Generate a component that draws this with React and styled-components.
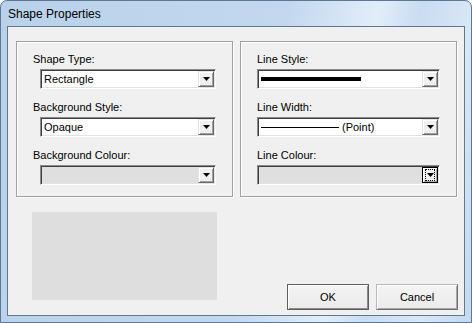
import React from 'react'
import styled, { createGlobalStyle } from 'styled-components'

const GlobalStyle = createGlobalStyle`
  html, body {
    margin: 0;
    padding: 0;
    background: #ffffff;
  }
  * {
    box-sizing: border-box;
  }
`

const Window = styled.div`
  width: 472px;
  height: 323px;
  display: flex;
  flex-direction: column;
  padding: 0 6px 6px 6px;
  border: 1px solid #5d7895;
  border-radius: 7px 7px 0 0;
  background: linear-gradient(
    100deg,
    #b9d1eb 0%,
    #c3d8ef 55%,
    #e2edf9 72%,
    #c9dcf1 80%,
    #d9e7f6 90%,
    #c4d8ef 100%
  );
  font-family: 'Liberation Sans', Arial, sans-serif;
`

const TitleBar = styled.div`
  height: 25px;
  display: flex;
  align-items: center;
  padding: 1px 0 0 1px;
  font-size: 12px;
  color: #000;
`

const Client = styled.div`
  flex: 1;
  display: flex;
  flex-direction: column;
  padding: 14px 6px 5px 8px;
  border: 1px solid #62778d;
  background: #f0f0f0;
  font-size: 11px;
  color: #000;
`

const GroupRow = styled.div`
  display: flex;
  gap: 7px;
`

const GroupBox = styled.div`
  width: 217px;
  height: 156px;
  display: flex;
  flex-direction: column;
  padding: 11px 16px 0 16px;
  border: 1px solid #a0a0a0;
  box-shadow: inset 1px 1px 0 #ffffff, 1px 1px 0 #ffffff;
`

const Field = styled.div`
  display: flex;
  flex-direction: column;
  margin-bottom: 12px;
`

const Label = styled.div`
  height: 13px;
  line-height: 13px;
  margin-bottom: 3px;
  white-space: nowrap;
`

const Combo = styled.div`
  height: 20px;
  margin-left: ${(p) => (p.$indent ? '7px' : '0')};
  display: flex;
  align-items: stretch;
  padding: 1px;
  border: 1px solid;
  border-color: #8a8a8a #ffffff #ffffff #8a8a8a;
  box-shadow: inset 1px 1px 0 #404040, inset -1px -1px 0 #e3e3e3;
  background: ${(p) => (p.$disabled ? '#dfdfdf' : '#ffffff')};
`

const ComboValue = styled.div`
  flex: 1;
  display: flex;
  align-items: center;
  padding-left: 2px;
  line-height: 13px;
  white-space: nowrap;
  overflow: hidden;
`

const Stroke = styled.span`
  display: inline-block;
  width: ${(p) => p.$w}px;
  height: ${(p) => p.$h}px;
  background: #000;
  margin-right: 3px;
`

const DropButton = styled.div`
  width: 16px;
  display: flex;
  align-items: center;
  justify-content: center;
  background: #f0f0f0;
  border: 1px solid;
  border-color: ${(p) =>
    p.$focused ? '#000000' : '#e3e3e3 #696969 #696969 #e3e3e3'};
  box-shadow: inset 1px 1px 0 #ffffff, inset -1px -1px 0 #a0a0a0;
`

const FocusRing = styled.span`
  width: 10px;
  height: 12px;
  display: flex;
  align-items: center;
  justify-content: center;
  border: 1px dotted #000;
`

const Arrow = () => (
  <svg width="7" height="4" viewBox="0 0 7 4">
    <polygon points="0,0 7,0 3.5,4" fill="#000" />
  </svg>
)

const BottomRow = styled.div`
  flex: 1;
  display: flex;
  justify-content: space-between;
  align-items: flex-end;
`

const Preview = styled.div`
  align-self: flex-start;
  width: 185px;
  height: 88px;
  margin: 15px 0 0 16px;
  background: #dedede;
`

const Buttons = styled.div`
  display: flex;
  gap: 7px;
`

const Button = styled.button`
  width: 82px;
  height: 26px;
  padding: 0;
  font-family: 'Liberation Sans', Arial, sans-serif;
  font-size: 11px;
  color: #000;
  background: linear-gradient(#f4f4f4, #ebebeb);
  border: 1px solid;
  border-color: ${(p) =>
    p.$default ? '#5e5e5e' : '#b8b8b8 #707070 #707070 #b8b8b8'};
  box-shadow: ${(p) =>
    p.$default
      ? 'inset 1px 1px 0 #ffffff, inset -1px -1px 0 #8a8a8a'
      : 'inset 1px 1px 0 #ffffff, inset -1px -1px 0 #a8a8a8'};
`

const Select = ({ value, indent, disabled, focused }) => (
  <Combo $indent={indent} $disabled={disabled}>
    <ComboValue>{value}</ComboValue>
    <DropButton $focused={focused}>
      {focused ? (
        <FocusRing>
          <Arrow />
        </FocusRing>
      ) : (
        <Arrow />
      )}
    </DropButton>
  </Combo>
)

export default function App() {
  return (
    <>
      <GlobalStyle />
      <Window>
        <TitleBar>Shape Properties</TitleBar>
        <Client>
          <GroupRow>
            <GroupBox>
              <Field>
                <Label>Shape Type:</Label>
                <Select indent value="Rectangle" />
              </Field>
              <Field>
                <Label>Background Style:</Label>
                <Select indent value="Opaque" />
              </Field>
              <Field>
                <Label>Background Colour:</Label>
                <Select indent disabled value="" />
              </Field>
            </GroupBox>
            <GroupBox>
              <Field>
                <Label>Line Style:</Label>
                <Select value={<Stroke $w={100} $h={4} />} />
              </Field>
              <Field>
                <Label>Line Width:</Label>
                <Select
                  value={
                    <>
                      <Stroke $w={78} $h={1} />
                      (Point)
                    </>
                  }
                />
              </Field>
              <Field>
                <Label>Line Colour:</Label>
                <Select disabled focused value="" />
              </Field>
            </GroupBox>
          </GroupRow>
          <BottomRow>
            <Preview />
            <Buttons>
              <Button $default>OK</Button>
              <Button>Cancel</Button>
            </Buttons>
          </BottomRow>
        </Client>
      </Window>
    </>
  )
}
